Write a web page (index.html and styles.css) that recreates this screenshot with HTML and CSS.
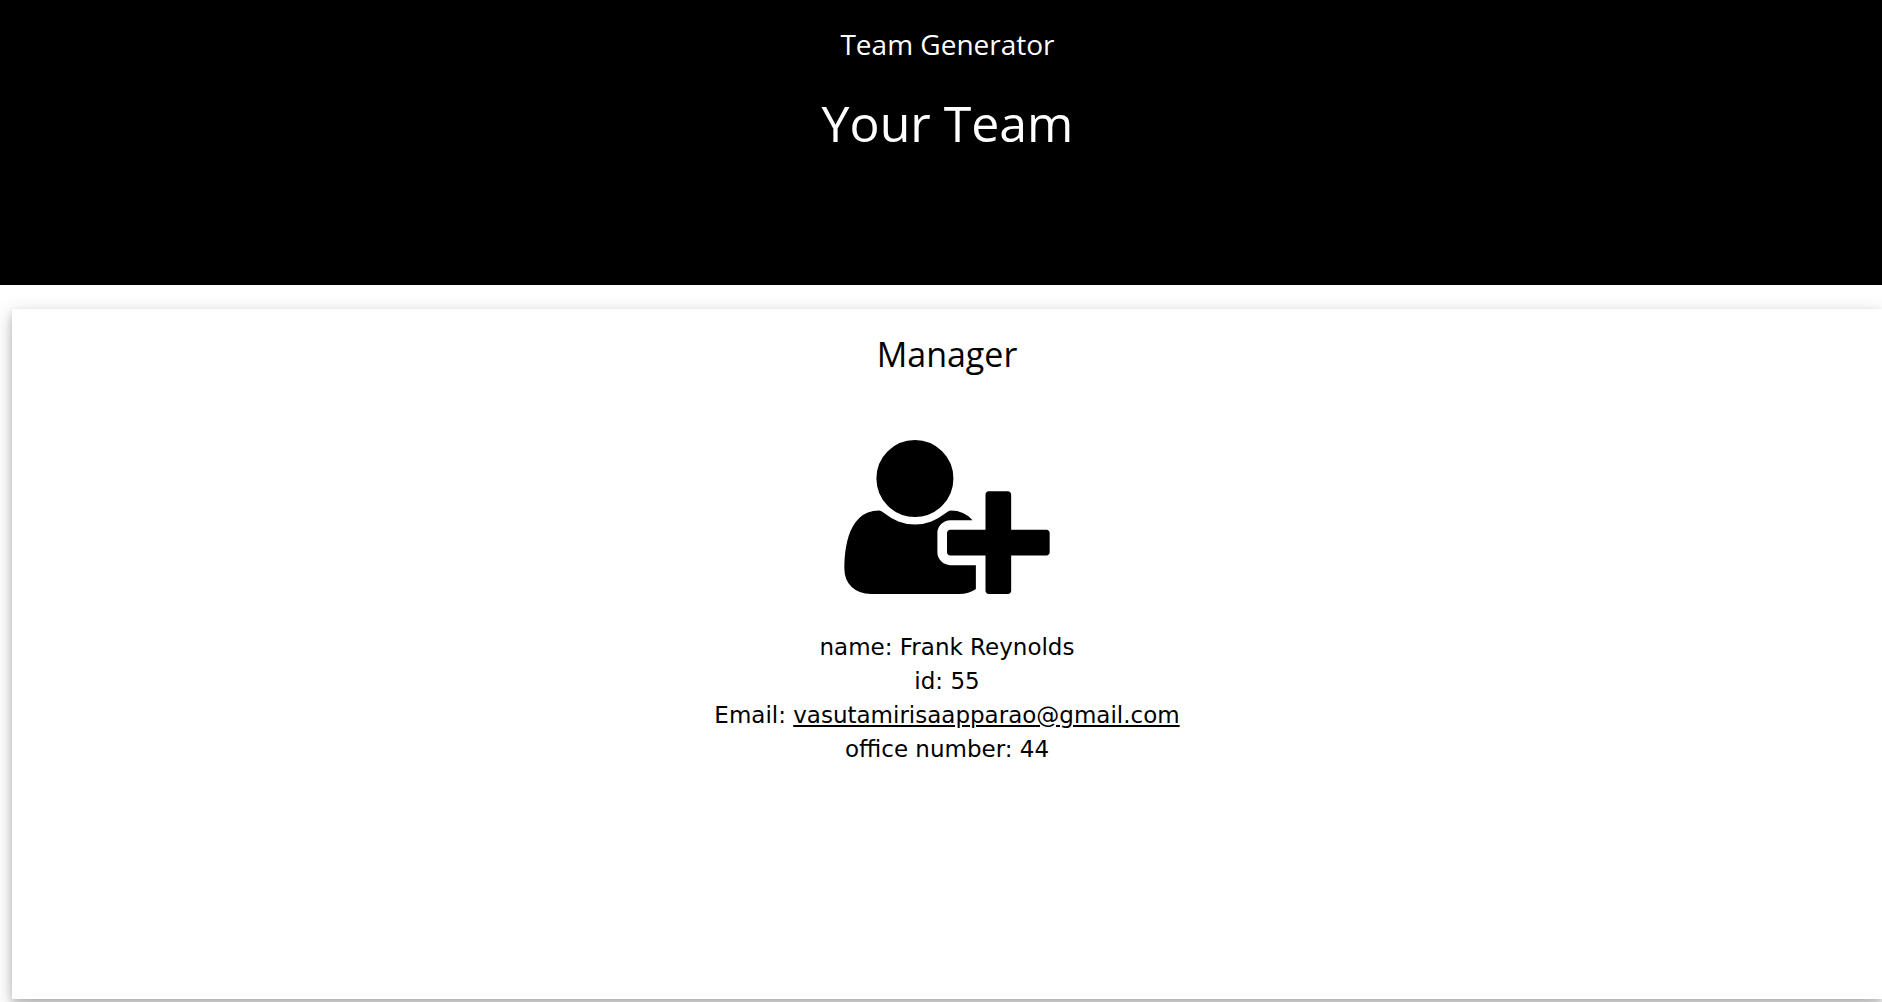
FILE: index.html
```html
<!DOCTYPE html>
<html lang="en">
<head>
<meta charset="utf-8">
<meta name="viewport" content="width=device-width, initial-scale=1">
<title>Team Generator</title>
<link rel="stylesheet" href="styles.css">
</head>
<body>
<header class="banner">
  <p class="banner-label">Team Generator</p>
  <h1 class="banner-title">Your Team</h1>
</header>
<main class="team">
  <section class="card">
    <h2 class="card-title">Manager</h2>
    <svg class="card-icon" viewBox="0 0 2048 1536" aria-hidden="true">
      <path transform="translate(0 1408) scale(1 -1)" d="M704 640q-159 0 -271.5 112.5t-112.5 271.5t112.5 271.5t271.5 112.5t271.5 -112.5t112.5 -271.5t-112.5 -271.5t-271.5 -112.5zM1664 512h352q13 0 22.5 -9.5t9.5 -22.5v-192q0 -13 -9.5 -22.5t-22.5 -9.5h-352v-352q0 -13 -9.5 -22.5t-22.5 -9.5h-192q-13 0 -22.5 9.5t-9.5 22.5v352h-352q-13 0 -22.5 9.5t-9.5 22.5v192q0 13 9.5 22.5t22.5 9.5h352v352q0 13 9.5 22.5t22.5 9.5h192q13 0 22.5 -9.5t9.5 -22.5v-352zM928 288q0 -52 38 -90t90 -38h256v-238q-68 -50 -171 -50h-874q-121 0 -194 69t-73 190q0 53 3.5 103.5t14 109t26.5 108.5t43 97.5t62 81t85.5 53.5t111.5 20q19 0 39 -17q79 -61 154.5 -91.5t164.5 -30.5t164.5 30.5t154.5 91.5q20 17 39 17q132 0 217 -96h-223q-52 0 -90 -38t-38 -90v-192z"/>
    </svg>
    <ul class="details">
      <li>name: Frank Reynolds</li>
      <li>id: 55</li>
      <li>Email: <a class="mail" href="mailto:vasutamirisaapparao@gmail.com">vasutamirisaapparao@gmail.com</a></li>
      <li>office number: 44</li>
    </ul>
  </section>
</main>
</body>
</html>
```
FILE: styles.css
```css
* {
  box-sizing: border-box;
}

body {
  margin: 0;
  background: #fff;
  color: #000;
  font-family: Verdana, "DejaVu Sans", sans-serif;
  font-size: 23px;
  line-height: 34px;
  overflow-x: hidden;
}

.banner {
  padding: 23px 0 124px 13px;
  background: #000;
  color: #fff;
  font-family: "Segoe UI", "Open Sans", sans-serif;
  text-align: center;
}

.banner-label {
  margin: 0 0 21px;
  font-size: 28px;
  line-height: 42px;
}

.banner-title {
  margin: 0;
  font-size: 50px;
  font-weight: 400;
  line-height: 75px;
}

.team {
  padding: 24px 0 3px 12px;
}

.card {
  display: flex;
  flex-direction: column;
  align-items: center;
  min-height: 690px;
  padding: 20px 0;
  background: #fff;
  box-shadow: 0 4px 8px rgba(0, 0, 0, 0.2), 0 6px 20px rgba(0, 0, 0, 0.19);
}

.card-title {
  margin: 0 0 61px;
  font-family: "Segoe UI", "Open Sans", sans-serif;
  font-size: 34px;
  font-weight: 400;
  line-height: 50px;
}

.card-icon {
  width: 206px;
  height: 154px;
  margin-bottom: 36px;
}

.details {
  margin: 0;
  padding: 0;
  list-style: none;
  text-align: center;
}

.mail {
  color: inherit;
}
```
